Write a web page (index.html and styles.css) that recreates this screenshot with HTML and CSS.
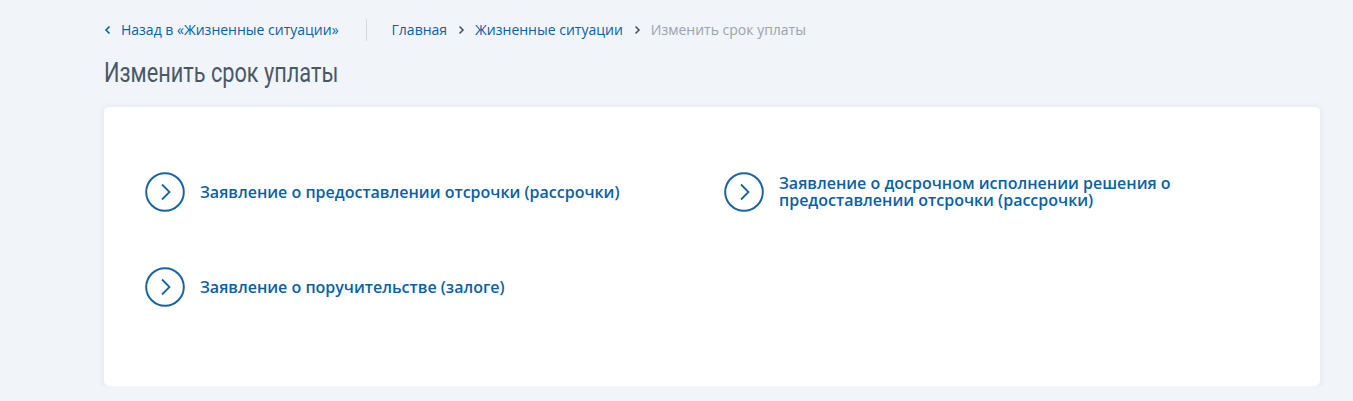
FILE: index.html
```html
<!DOCTYPE html>
<html lang="ru">
<head>
<meta charset="utf-8">
<link rel="stylesheet" href="styles.css">
</head>
<body>
<div class="page">
  <nav class="crumbs">
    <a class="back" href="#"><svg class="chev" width="8" height="10" viewBox="0 0 8 10"><path d="M5.5 1.5 2 5l3.5 3.5" fill="none" stroke="currentColor" stroke-width="1.6"/></svg>Назад в «Жизненные ситуации»</a>
    <span class="sep"></span>
    <a href="#">Главная</a>
    <svg class="chev dark" width="8" height="10" viewBox="0 0 8 10"><path d="M2.5 1.5 6 5 2.5 8.5" fill="none" stroke="currentColor" stroke-width="1.6"/></svg>
    <a href="#">Жизненные ситуации</a>
    <svg class="chev dark" width="8" height="10" viewBox="0 0 8 10"><path d="M2.5 1.5 6 5 2.5 8.5" fill="none" stroke="currentColor" stroke-width="1.6"/></svg>
    <span class="current">Изменить срок уплаты</span>
  </nav>
  <h1 class="title"><span class="title-text">Изменить срок уплаты</span></h1>
  <div class="card">
    <div class="grid">
      <a class="item" href="#">
        <svg class="circ" width="40" height="40" viewBox="0 0 40 40"><circle cx="20" cy="20" r="18.8" fill="none" stroke="currentColor" stroke-width="2"/><path d="M17 12.5 24.5 20 17 27.5" fill="none" stroke="currentColor" stroke-width="1.8"/></svg>
        <span class="label">Заявление о предоставлении отсрочки (рассрочки)</span>
      </a>
      <a class="item" href="#">
        <svg class="circ" width="40" height="40" viewBox="0 0 40 40"><circle cx="20" cy="20" r="18.8" fill="none" stroke="currentColor" stroke-width="2"/><path d="M17 12.5 24.5 20 17 27.5" fill="none" stroke="currentColor" stroke-width="1.8"/></svg>
        <span class="label">Заявление о досрочном исполнении решения о предоставлении отсрочки (рассрочки)</span>
      </a>
      <a class="item" href="#">
        <svg class="circ" width="40" height="40" viewBox="0 0 40 40"><circle cx="20" cy="20" r="18.8" fill="none" stroke="currentColor" stroke-width="2"/><path d="M17 12.5 24.5 20 17 27.5" fill="none" stroke="currentColor" stroke-width="1.8"/></svg>
        <span class="label">Заявление о поручительстве (залоге)</span>
      </a>
    </div>
  </div>
</div>
</body>
</html>
```
FILE: styles.css
```css
html, body {
  margin: 0;
  padding: 0;
  background: #f1f4f9;
}
body {
  font-family: "Open Sans", "Noto Sans", sans-serif;
  color: #333;
}
.page {
  padding: 19px 33px 0 104px;
}
.crumbs {
  display: flex;
  align-items: center;
  height: 22px;
  font-size: 14px;
  line-height: 22px;
}
.crumbs a {
  color: #0b5fa5;
  text-decoration: none;
}
.crumbs .back {
  display: flex;
  align-items: center;
  gap: 9px;
}
.chev {
  display: block;
  color: #0b5fa5;
}
.chev.dark {
  color: #4a5560;
  margin: 0 10px;
}
.sep {
  width: 1px;
  height: 22px;
  background: #d3d8de;
  margin: 0 25px 0 27px;
}
.current {
  color: #9aa3ab;
}
.title {
  margin: 17px 0 0;
  font-family: "Roboto", "DejaVu Sans Condensed", sans-serif;
  font-weight: 400;
  font-size: 28px;
  line-height: 30px;
  color: #4a5866;
}
.title-text {
  display: inline-block;
  transform: scaleX(0.776);
  transform-origin: left center;
}
.card {
  margin-top: 19px;
  background: #fff;
  border-radius: 5px;
  box-shadow: 0 1px 6px rgba(170, 185, 205, 0.25);
  height: 279px;
  box-sizing: border-box;
  padding: 65px 40px 0 41px;
}
.grid {
  display: grid;
  grid-template-columns: 579px 1fr;
  row-gap: 55px;
}
.item {
  display: flex;
  align-items: center;
  gap: 15px;
  color: #0b5fa5;
  text-decoration: none;
  min-height: 40px;
}
.circ {
  flex: none;
  display: block;
  color: #1763a8;
}
.label {
  font-size: 16px;
  font-weight: 600;
  line-height: 17px;
  max-width: 440px;
}
```
